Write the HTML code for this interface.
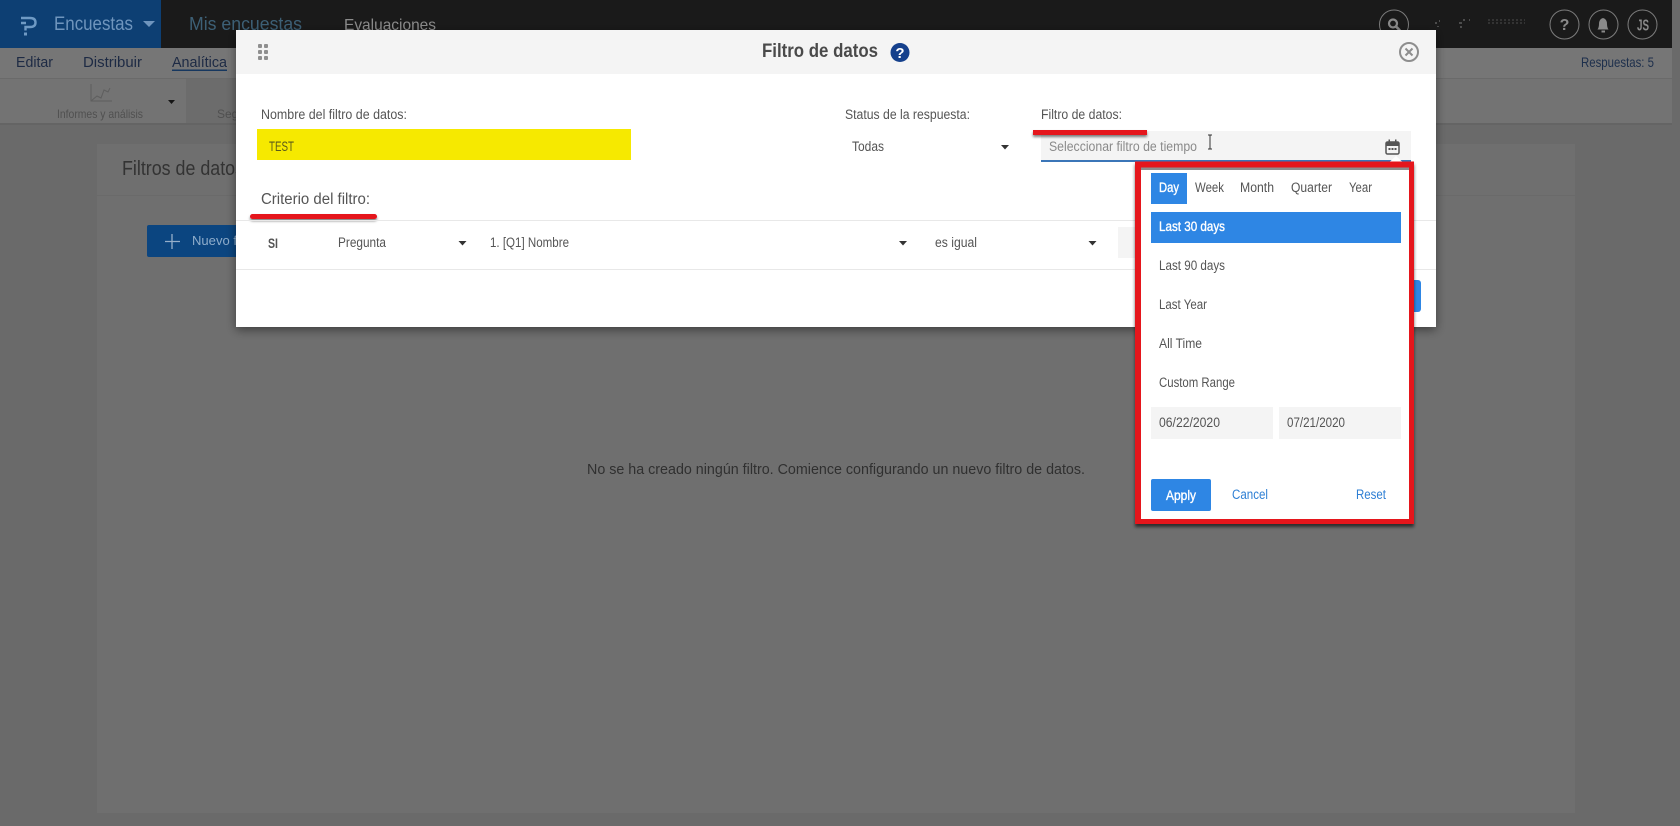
<!DOCTYPE html>
<html lang="es">
<head>
<meta charset="utf-8">
<title>Filtro de datos</title>
<style>
html,body{margin:0;padding:0;background:#6a6a6a;width:1680px;height:826px;overflow:hidden}
svg{display:block}
text{font-family:"Liberation Sans",sans-serif;font-size:13.5px;fill:#555}
</style>
</head>
<body>
<svg xmlns="http://www.w3.org/2000/svg" width="1680" height="826" viewBox="0 0 1680 826">
<defs>
<filter id="ms" x="-5%" y="-10%" width="110%" height="125%"><feDropShadow dx="0" dy="3" stdDeviation="5" flood-color="#000" flood-opacity=".45"/></filter>
<filter id="rs" x="-10%" y="-10%" width="120%" height="120%"><feDropShadow dx="0" dy="3" stdDeviation="1.5" flood-color="#000" flood-opacity=".6"/></filter>
<filter id="ls" x="-10%" y="-60%" width="120%" height="300%"><feDropShadow dx="0" dy="2" stdDeviation="1.2" flood-color="#000" flood-opacity=".5"/></filter>
</defs>

<!-- page -->
<rect width="1680" height="826" fill="#6a6a6a"/>
<rect x="0" y="48" width="1672" height="30" fill="#767676"/>
<rect x="0" y="78" width="1672" height="1" fill="#6a6a6a"/>
<rect x="0" y="79" width="1672" height="45" fill="#737373"/>
<rect x="186" y="79" width="60" height="45" fill="#6c6c6c"/>
<rect x="0" y="123" width="1672" height="2" fill="#646464"/>
<rect x="97" y="144" width="1478" height="669" fill="#6f6f6f"/>
<rect x="97" y="195" width="1478" height="1" fill="#6a6a6a"/>

<!-- top bar -->
<rect width="1672" height="48" fill="#1a1a1a"/>
<rect width="161" height="48" fill="#0d3f73"/>
<path d="M21 18H30Q35.500 18 35.500 22.500Q35.500 27 30 27H25.500V30.500M21 23H26" fill="none" stroke="#6f9ac4" stroke-width="2.400"/>
<rect x="24" y="32.500" width="3" height="3" fill="#6f9ac4"/>
<text x="54" y="30" textLength="79" lengthAdjust="spacingAndGlyphs" style="font-size:19px;fill:#6f95bd">Encuestas</text>
<path d="M143 21H155L149 27Z" fill="#6f95bd"/>
<text x="189" y="30" textLength="113" lengthAdjust="spacingAndGlyphs" style="font-size:18px;fill:#3d6076">Mis encuestas</text>
<text x="344" y="30" textLength="92" lengthAdjust="spacingAndGlyphs" style="font-size:16px;fill:#8c8c8c">Evaluaciones</text>

<!-- top right -->
<g fill="none" stroke="#7c7c7c" stroke-width="1">
<circle cx="1394" cy="24.500" r="14.500"/>
<circle cx="1564.500" cy="24.500" r="14.500"/>
<circle cx="1603.500" cy="24.500" r="14.500"/>
<circle cx="1642.500" cy="24.500" r="14.500"/>
</g>
<circle cx="1393" cy="23.500" r="4" fill="none" stroke="#8a8a8a" stroke-width="2.200"/>
<path d="M1396 26.500L1400 30.500" stroke="#8a8a8a" stroke-width="2.600"/>
<text x="1564.500" y="30" text-anchor="middle" style="font-size:16px;font-weight:bold;fill:#8a8a8a">?</text>
<path d="M1603 18Q1607 19 1607 24Q1607 27.500 1608.500 29.500H1597.500Q1599 27.500 1599 24Q1599 19 1603 18Z" fill="#8a8a8a"/>
<rect x="1601.500" y="30.500" width="3.500" height="2" fill="#8a8a8a"/>
<text x="1637" y="30.500" textLength="12" lengthAdjust="spacingAndGlyphs" style="font-size:16px;font-weight:bold;fill:#8a8a8a">JS</text>
<g fill="#4c4c4c">
<rect x="1435" y="22" width="2" height="2"/><rect x="1439" y="20" width="1" height="2"/><rect x="1437" y="26" width="2" height="1"/>
<rect x="1459" y="22" width="3" height="2"/><rect x="1463" y="19" width="2" height="2"/><rect x="1460" y="26" width="2" height="2"/><rect x="1469" y="19" width="1" height="2"/>
</g>
<path d="M1488 20H1525M1488 23H1525" stroke="#4c4c4c" stroke-width="1" stroke-dasharray="2 2"/>

<!-- subnav -->
<text x="16" y="67" textLength="37" lengthAdjust="spacingAndGlyphs" style="font-size:15px;fill:#1d2a44">Editar</text>
<text x="83" y="67" textLength="59" lengthAdjust="spacingAndGlyphs" style="font-size:15px;fill:#1d2a44">Distribuir</text>
<text x="172" y="67" textLength="55" lengthAdjust="spacingAndGlyphs" style="font-size:15px;fill:#1d2a44">Analítica</text>
<rect x="172" y="69.500" width="55" height="1.500" fill="#16375f"/>
<text x="1581" y="67" textLength="73" lengthAdjust="spacingAndGlyphs" style="font-size:14px;fill:#1d2f4c">Respuestas: 5</text>

<!-- toolbar -->
<path d="M91 84V101H112M91 101L97 96L101 98L104 90L108 92L110 88" fill="none" stroke="#5e5e5e" stroke-width="1"/>
<text x="57" y="118" textLength="86" lengthAdjust="spacingAndGlyphs" style="font-size:12px;fill:#505050">Informes y análisis</text>
<path d="M168 100H175L171.500 104Z" fill="#151515"/>
<text x="217" y="118" style="font-size:12px;fill:#505050">Segmentos</text>

<!-- background content -->
<text x="122" y="175" textLength="122" lengthAdjust="spacingAndGlyphs" style="font-size:20px;fill:#333">Filtros de datos</text>
<rect x="147" y="225" width="120" height="32" rx="2" fill="#0b4580"/>
<path d="M172 234V249M165 241.500H180" stroke="#95aec9" stroke-width="1.300"/>
<text x="192" y="245" textLength="66" lengthAdjust="spacingAndGlyphs" style="font-size:13px;fill:#8fadcb">Nuevo filtro</text>
<text x="587" y="474" textLength="498" lengthAdjust="spacingAndGlyphs" style="font-size:15px;fill:#303030">No se ha creado ningún filtro. Comience configurando un nuevo filtro de datos.</text>

<!-- modal -->
<rect x="236" y="30" width="1200" height="297" fill="#fff" filter="url(#ms)"/>
<rect x="236" y="30" width="1200" height="44" fill="#f4f4f4"/>
<g fill="#8f8f8f">
<rect x="258" y="44" width="4" height="4" rx="1"/><rect x="264" y="44" width="4" height="4" rx="1"/>
<rect x="258" y="50" width="4" height="4" rx="1"/><rect x="264" y="50" width="4" height="4" rx="1"/>
<rect x="258" y="56" width="4" height="4" rx="1"/><rect x="264" y="56" width="4" height="4" rx="1"/>
</g>
<text x="762" y="57" textLength="116" lengthAdjust="spacingAndGlyphs" style="font-size:19px;font-weight:bold;fill:#4a4a4a">Filtro de datos</text>
<circle cx="900" cy="52.500" r="9.500" fill="#15408c"/>
<text x="900" y="58" text-anchor="middle" style="font-size:15px;font-weight:bold;fill:#fff">?</text>
<circle cx="1409" cy="52" r="9" fill="none" stroke="#8e8e8e" stroke-width="2"/>
<path d="M1405.500 48.500L1412.500 55.500M1412.500 48.500L1405.500 55.500" stroke="#8e8e8e" stroke-width="2"/>

<text x="261" y="119" textLength="146" lengthAdjust="spacingAndGlyphs">Nombre del filtro de datos:</text>
<rect x="257" y="129" width="374" height="31" fill="#f6e900"/>
<text x="269" y="151" textLength="25" lengthAdjust="spacingAndGlyphs" style="fill:#5a5a1a">TEST</text>
<text x="845" y="119" textLength="125" lengthAdjust="spacingAndGlyphs">Status de la respuesta:</text>
<text x="852" y="151" textLength="32" lengthAdjust="spacingAndGlyphs">Todas</text>
<path d="M1001 145H1009L1005 149.500Z" fill="#333"/>
<text x="1041" y="119" textLength="81" lengthAdjust="spacingAndGlyphs">Filtro de datos:</text>
<rect x="1041" y="131" width="370" height="30" fill="#f4f4f4"/>
<rect x="1041" y="160" width="370" height="2" fill="#3b76b8"/>
<text x="1049" y="151" textLength="148" lengthAdjust="spacingAndGlyphs" style="fill:#8a8a8a">Seleccionar filtro de tiempo</text>
<path d="M1208 135H1212M1210 135V149M1208 149H1212" stroke="#333" stroke-width="1" fill="none"/>
<rect x="1386" y="142" width="13" height="12" rx="1.500" fill="#f4f4f4" stroke="#555" stroke-width="1.500"/>
<rect x="1386" y="142" width="13" height="4" fill="#555"/>
<rect x="1388.500" y="139.500" width="1.500" height="3" fill="#555"/><rect x="1395" y="139.500" width="1.500" height="3" fill="#555"/>
<rect x="1388.500" y="148" width="2" height="2" fill="#555"/><rect x="1391.500" y="148" width="2" height="2" fill="#555"/><rect x="1394.500" y="148" width="2" height="2" fill="#555"/>

<rect x="250" y="214" width="127" height="5" rx="2.500" fill="#e5131f" filter="url(#ls)"/>
<rect x="1033" y="130" width="114" height="5" fill="#e5131f" filter="url(#ls)"/>

<text x="261" y="204" textLength="109" lengthAdjust="spacingAndGlyphs" style="font-size:15.500px">Criterio del filtro:</text>
<rect x="236" y="220" width="1200" height="1" fill="#e8e8e8"/>
<rect x="236" y="269" width="1200" height="1" fill="#e8e8e8"/>
<text x="268" y="248" textLength="10" lengthAdjust="spacingAndGlyphs" style="font-weight:bold;fill:#555">SI</text>
<text x="338" y="247" textLength="48" lengthAdjust="spacingAndGlyphs">Pregunta</text>
<path d="M458.500 241H466.500L462.500 245.500Z" fill="#333"/>
<text x="490" y="247" textLength="79" lengthAdjust="spacingAndGlyphs">1. [Q1] Nombre</text>
<path d="M899 241H907L903 245.500Z" fill="#333"/>
<text x="935" y="247" textLength="42" lengthAdjust="spacingAndGlyphs">es igual</text>
<path d="M1088.500 241H1096.500L1092.500 245.500Z" fill="#333"/>
<rect x="1118" y="227" width="18" height="31" fill="#f4f4f4"/>
<rect x="1380" y="280" width="41" height="32" rx="3" fill="#2e86e4"/>

<!-- dropdown -->
<rect x="1135" y="161.500" width="279" height="362.500" fill="#e5131f" filter="url(#rs)"/>
<path d="M1390 161.500L1396 156L1402 161.500Z" fill="#fff"/>
<rect x="1141" y="167.500" width="268" height="3" fill="#8d8d8d"/>
<rect x="1141" y="170" width="268" height="349" fill="#fff"/>
<rect x="1151" y="173" width="36" height="31" fill="#2e86e4"/>
<text x="1159" y="192" textLength="20" lengthAdjust="spacingAndGlyphs" style="fill:#fff;stroke:#fff;stroke-width:.35px">Day</text>
<text x="1195" y="192" textLength="29" lengthAdjust="spacingAndGlyphs">Week</text>
<text x="1240" y="192" textLength="34" lengthAdjust="spacingAndGlyphs">Month</text>
<text x="1291" y="192" textLength="41" lengthAdjust="spacingAndGlyphs">Quarter</text>
<text x="1349" y="192" textLength="23" lengthAdjust="spacingAndGlyphs">Year</text>
<rect x="1151" y="212" width="250" height="31" fill="#2e86e4"/>
<text x="1159" y="231" textLength="66" lengthAdjust="spacingAndGlyphs" style="fill:#fff;stroke:#fff;stroke-width:.35px">Last 30 days</text>
<text x="1159" y="270" textLength="66" lengthAdjust="spacingAndGlyphs">Last 90 days</text>
<text x="1159" y="309" textLength="48" lengthAdjust="spacingAndGlyphs">Last Year</text>
<text x="1159" y="348" textLength="43" lengthAdjust="spacingAndGlyphs">All Time</text>
<text x="1159" y="387" textLength="76" lengthAdjust="spacingAndGlyphs">Custom Range</text>
<rect x="1151" y="407" width="122" height="32" fill="#f4f4f4"/>
<rect x="1279" y="407" width="122" height="32" fill="#f4f4f4"/>
<text x="1159" y="427" textLength="61" lengthAdjust="spacingAndGlyphs">06/22/2020</text>
<text x="1287" y="427" textLength="58" lengthAdjust="spacingAndGlyphs">07/21/2020</text>
<rect x="1151" y="479" width="60" height="32" rx="2" fill="#2e86e4"/>
<text x="1166" y="500" textLength="30" lengthAdjust="spacingAndGlyphs" style="fill:#fff;stroke:#fff;stroke-width:.35px">Apply</text>
<text x="1232" y="499" textLength="36" lengthAdjust="spacingAndGlyphs" style="fill:#2e7fd4">Cancel</text>
<text x="1356" y="499" textLength="30" lengthAdjust="spacingAndGlyphs" style="fill:#2e7fd4">Reset</text>
</svg>
</body>
</html>
